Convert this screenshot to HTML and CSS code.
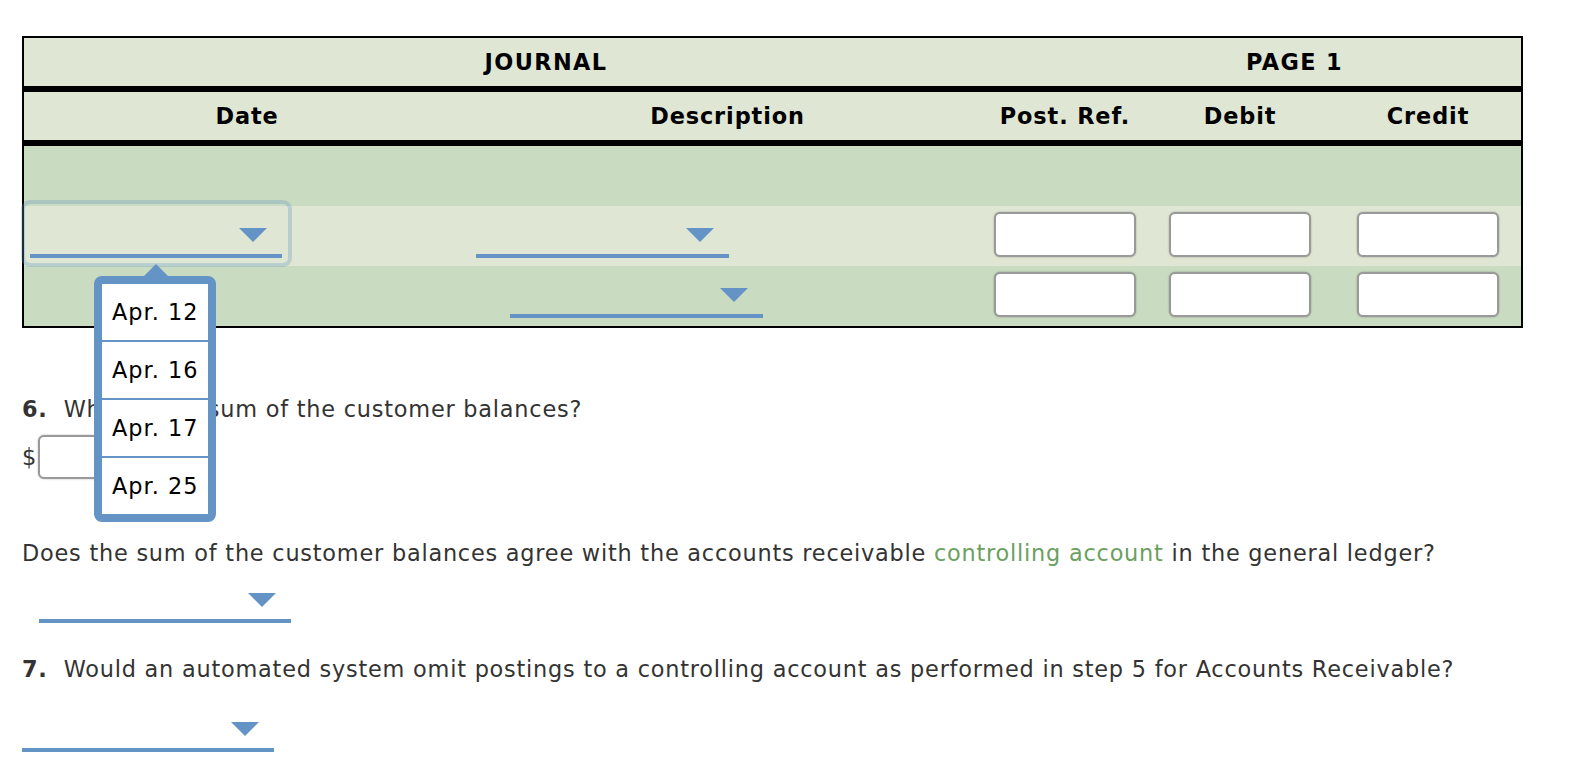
FILE: index.html
```html
<!DOCTYPE html>
<html lang="en">
<head>
    <meta charset="UTF-8">
    <meta name="viewport" content="width=device-width, initial-scale=1.0">
    <title>Journal</title>
    <link rel="stylesheet" href="styles.css">
</head>
<body>

<div class="page">
    <div class="journal">
        <div class="journal-title">
            <div>JOURNAL</div>
            <div>PAGE 1</div>
        </div>
        <div class="journal-head">
            <div>Date</div>
            <div>Description</div>
            <div>Post. Ref.</div>
            <div>Debit</div>
            <div>Credit</div>
        </div>
        <div class="journal-row">
            <div></div><div></div><div></div><div></div><div></div>
        </div>
        <div class="journal-row light">
            <div class="cell-select cell-open">
                <div class="select is-open"><span class="arrow"></span><span class="line"></span></div>
            </div>
            <div class="cell-select">
                <div class="select wide"><span class="arrow"></span><span class="line"></span></div>
            </div>
            <div class="cell-input"><input type="text"></div>
            <div class="cell-input"><input type="text"></div>
            <div class="cell-input"><input type="text"></div>
        </div>
        <div class="journal-row">
            <div></div>
            <div class="cell-select indent">
                <div class="select wide"><span class="arrow"></span><span class="line"></span></div>
            </div>
            <div class="cell-input"><input type="text"></div>
            <div class="cell-input"><input type="text"></div>
            <div class="cell-input"><input type="text"></div>
        </div>
    </div>

    <p class="question q6"><span class="num">6.</span>What is the sum of the customer balances?</p>
    <div class="amount">$<input type="text" class="amount-input"></div>

    <p class="question q-agree">Does the sum of the customer balances agree with the accounts receivable <a class="term">controlling account</a> in the general ledger?</p>
    <div class="select answer-agree"><span class="arrow"></span><span class="line"></span></div>

    <p class="question q7"><span class="num">7.</span>Would an automated system omit postings to a controlling account as performed in step 5 for Accounts Receivable?</p>
    <div class="select answer-auto"><span class="arrow"></span><span class="line"></span></div>

    <ul class="menu">
        <li>Apr. 12</li>
        <li>Apr. 16</li>
        <li>Apr. 17</li>
        <li>Apr. 25</li>
    </ul>
</div>

</body>
</html>
```

FILE: styles.css
```css
body {
    margin: 0;
    font-family: "DejaVu Sans", Verdana, sans-serif;
    font-size: 22.4px;
    letter-spacing: 0.78px;
    color: #333;
    background: #fff;
}
.page {
    position: relative;
    padding: 36px 0 0 22px;
}

/* journal table */
.journal {
    width: 1497px;
    border: 2px solid #000;
    background-color: #c9dbc0;
}
.journal-title,
.journal-head {
    display: grid;
    height: 48px;
    background-color: #dfe7d4;
    border-bottom: 6px solid #000;
    font-weight: bold;
    color: #000;
    letter-spacing: 0.9px;
}
.journal-title {
    grid-template-columns: 1044px 453px;
    letter-spacing: 1.4px;
}
.journal-head,
.journal-row {
    grid-template-columns: 446px 515px 160px 190px 186px;
}
.journal-title div,
.journal-head div {
    display: flex;
    align-items: center;
    justify-content: center;
}
.journal-row {
    display: grid;
    grid-template-rows: 60px;
    background-color: #c9dbc0;
}
.journal-row.light {
    background-color: #dfe7d4;
}
.cell-select {
    display: flex;
    align-items: flex-end;
    padding: 0 0 8px 6px;
}
.cell-select.indent {
    padding-left: 40px;
}
.cell-select.cell-open {
    padding: 0 0 3px 1px;
}
.cell-input {
    display: flex;
    justify-content: center;
    padding-top: 6px;
}
input[type="text"] {
    width: 142px;
    height: 45px;
    margin: 0;
    padding: 0 6px;
    box-sizing: border-box;
    border: 2px solid #999;
    border-radius: 6px;
    background: #fff;
    box-shadow: 0 0 2px rgba(0, 0, 0, 0.3);
}

/* dropdown look */
.select {
    display: flex;
    flex-direction: column;
    width: 252px;
}
.select.wide {
    width: 253px;
}
.select .arrow {
    align-self: flex-end;
    width: 0;
    height: 0;
    margin-right: 15px;
    margin-bottom: 12px;
    border-left: 14px solid transparent;
    border-right: 14px solid transparent;
    border-top: 14px solid #6494c5;
}
.select .line {
    height: 4px;
    background-color: #6494c5;
}
.select.is-open {
    padding: 24px 6px 5px 5px;
    border-radius: 5px;
    box-shadow: 0 0 0 4px rgba(100, 148, 197, 0.3);
}

/* questions */
.question {
    margin: 0;
    line-height: 31px;
}
.num {
    font-weight: bold;
    margin-right: 16px;
}
.q6 {
    margin-top: 66px;
}
.amount {
    display: flex;
    align-items: center;
    margin-top: 10px;
}
.amount-input {
    width: 140px !important;
    height: 44px !important;
    margin-left: 1px !important;
}
.q-agree {
    margin-top: 59px;
}
.term {
    color: #6aa060;
    text-decoration: none;
}
.answer-agree {
    margin: 24px 0 0 17px;
}
.q7 {
    margin-top: 31px;
}
.answer-auto {
    margin-top: 37px;
}

/* open date menu */
.menu {
    position: absolute;
    left: 94px;
    top: 276px;
    width: 106px;
    margin: 0;
    padding: 0;
    list-style: none;
    background: #fff;
    border: 8px solid #6494c5;
    border-radius: 8px;
    color: #000;
    letter-spacing: 1px;
}
.menu::before {
    content: "";
    position: absolute;
    left: 42px;
    top: -20px;
    border-left: 12px solid transparent;
    border-right: 12px solid transparent;
    border-bottom: 12px solid #6494c5;
}
.menu li {
    height: 56px;
    line-height: 56px;
    padding-left: 10px;
}
.menu li + li {
    border-top: 2px solid #6494c5;
}
```
